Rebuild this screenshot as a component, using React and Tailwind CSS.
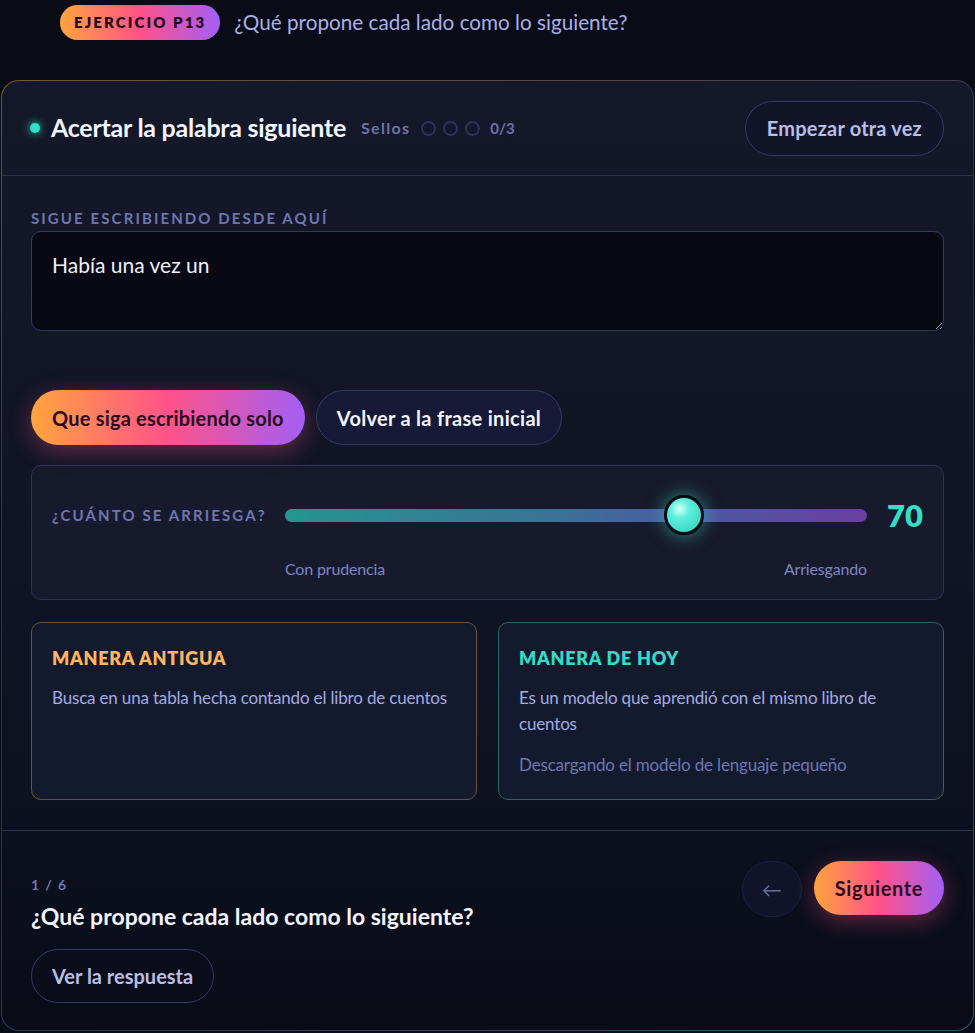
import { useState } from "react";

const grad = "bg-[linear-gradient(90deg,#ffa43d_0%,#ff5289_50%,#a25ff5_100%)]";

const Seal = () => (
    <span className="inline-block w-[15px] h-[15px] rounded-full border-2 border-[#2d3260]"></span>
);

const App = () => {
    const [text, setText] = useState("Había una vez un");
    const risk = 70;

    return (
        <div className="min-h-[1033px] bg-[#090b16] font-['Lato','Noto_Sans',sans-serif] text-white">
            {/* top strip */}
            <div className="flex items-center gap-[14px] pl-[60px] pt-[5px] h-[40px]">
                <span className={`${grad} h-[35px] px-[14px] rounded-full flex items-center text-[15px] font-extrabold tracking-[0.14em] text-[#240a1e]`}>
                    EJERCICIO P13
                </span>
                <span className="text-[20.7px] text-[#aab0e6]">¿Qué propone cada lado como lo siguiente?</span>
            </div>

            <div className="mt-[40px] mx-[1px] rounded-[18px] p-[1px] bg-[linear-gradient(160deg,#7a5635_0%,#2f3158_35%,#2c3458_70%,#275a60_100%)]">
                <div className="rounded-[17px] bg-[linear-gradient(180deg,#151829_0%,#121526_40%,#0e1120_75%,#090b17_100%)]">
                    {/* header */}
                    <div className="flex items-center justify-between h-[95px] pl-[28px] pr-[29px] border-b border-[#2c315a]">
                        <div className="flex items-center">
                            <span className="w-[10px] h-[10px] rounded-full bg-[#32e0c8] shadow-[0_0_8px_#32e0c8]"></span>
                            <h1 className="ml-[11px] text-[25px] font-bold tracking-[-0.01em] text-[#f2f4ff]">Acertar la palabra siguiente</h1>
                            <span className="ml-[15px] text-[16px] font-bold tracking-[0.08em] text-[#6d73ad]">Sellos</span>
                            <div className="ml-[11px] flex gap-[7px]">
                                <Seal />
                                <Seal />
                                <Seal />
                            </div>
                            <span className="ml-[10px] text-[15px] font-bold text-[#6d73ad]">0/3</span>
                        </div>
                        <button className="h-[55px] px-[21px] rounded-full border border-[#353a68] bg-[#121528] text-[20px] font-bold tracking-[0.01em] text-[#b9bee9]">
                            Empezar otra vez
                        </button>
                    </div>

                    <div className="px-[29px] pt-[34px]">
                        <label className="block text-[15px] font-bold tracking-[0.14em] text-[#6f76b4] leading-[16px]">SIGUE ESCRIBIENDO DESDE AQUÍ</label>
                        <textarea
                            value={text}
                            onChange={(e) => setText(e.target.value)}
                            className="mt-[5px] block w-full h-[100px] rounded-[10px] border border-[#343a68] bg-[#080914] px-[20px] py-[17px] text-[21px] text-[#eef0fb] outline-none resize-y"
                        />

                        <div className="mt-[59px] flex gap-[11px]">
                            <button className={`${grad} h-[55px] px-[21px] rounded-full text-[20px] font-bold tracking-[0.01em] text-[#2a0b22] shadow-[0_6px_22px_rgba(255,82,137,0.35)]`}>
                                Que siga escribiendo solo
                            </button>
                            <button className="h-[55px] px-[20px] rounded-full border border-[#343a66] bg-[#171a37] text-[20px] font-bold tracking-[0.015em] text-[#f2f4ff]">
                                Volver a la frase inicial
                            </button>
                        </div>

                        {/* slider */}
                        <div className="mt-[20px] rounded-[10px] border border-[#2e3358] bg-[#171a2c] px-[20px] pt-[30px] pb-[18px]">
                            <div className="flex items-center h-[38px]">
                                <span className="w-[233px] text-[15px] font-bold tracking-[0.14em] text-[#6f76b4]">¿CUÁNTO SE ARRIESGA?</span>
                                <div className="relative flex-1 h-[13px] rounded-full bg-[linear-gradient(90deg,#24968f_0%,#3b7296_45%,#4c5aa0_70%,#6a3ea2_100%)]">
                                    <span
                                        className="absolute top-1/2 w-[40px] h-[40px] -translate-y-1/2 rounded-full border-[3px] border-[#080a14] bg-[radial-gradient(circle_at_38%_32%,#d8fff8_0%,#5ef0dc_30%,#2cc9b8_100%)] shadow-[0_0_18px_rgba(60,230,210,0.55)]"
                                        style={{ left: `calc(${risk / 100} * (100% - 40px))` }}
                                    ></span>
                                </div>
                                <span className="w-[56px] text-right text-[31px] font-extrabold text-[#36dcc6]">{risk}</span>
                            </div>
                            <div className="mt-[23px] flex justify-between pl-[233px] pr-[56px] text-[16px] tracking-[-0.01em] text-[#7e86c2]">
                                <span>Con prudencia</span>
                                <span>Arriesgando</span>
                            </div>
                        </div>

                        {/* comparison */}
                        <div className="mt-[22px] grid grid-cols-2 gap-[21px]">
                            <div className="h-[178px] rounded-[10px] border border-[#6e5436] bg-[#141a2d] px-[20px] pt-[22px]">
                                <h3 className="text-[18px] font-extrabold tracking-[0.04em] text-[#ffb462]">MANERA ANTIGUA</h3>
                                <p className="mt-[13px] text-[17px] leading-[26px] tracking-[-0.01em] text-[#a3abe2]">Busca en una tabla hecha contando el libro de cuentos</p>
                            </div>
                            <div className="h-[178px] rounded-[10px] border border-[#2a6464] bg-[#141a2d] px-[20px] pt-[22px]">
                                <h3 className="text-[18px] font-extrabold tracking-[0.04em] text-[#33dcc7]">MANERA DE HOY</h3>
                                <p className="mt-[13px] text-[17px] leading-[26px] tracking-[-0.01em] text-[#a3abe2]">Es un modelo que aprendió con el mismo libro de cuentos</p>
                                <p className="mt-[15px] text-[17px] leading-[26px] tracking-[-0.01em] text-[#6f77b2]">Descargando el modelo de lenguaje pequeño</p>
                            </div>
                        </div>
                    </div>

                    {/* footer */}
                    <div className="mt-[30px] border-t border-[#2c315a] flex justify-between px-[29px] pt-[30px] pb-[27px]">
                        <div>
                            <div className="mt-[13px] text-[14px] font-bold tracking-[0.1em] text-[#6f76b4]">1 / 6</div>
                            <h2 className="mt-[4px] text-[23px] font-bold text-[#f2f4ff]">¿Qué propone cada lado como lo siguiente?</h2>
                            <button className="mt-[15px] h-[54px] px-[20px] rounded-full border border-[#343a66] text-[20px] font-bold text-[#b9bee9]">
                                Ver la respuesta
                            </button>
                        </div>
                        <div className="flex items-start gap-[12px]">
                            <button className="w-[60px] h-[56px] rounded-full border border-[#1d2140] bg-[#11142a] text-[20px] text-[#6a6e92]">←</button>
                            <button className={`${grad} h-[54px] px-[21px] rounded-full text-[20px] font-bold tracking-[0.03em] text-[#2a0b22] shadow-[0_6px_22px_rgba(255,82,137,0.35)]`}>
                                Siguiente
                            </button>
                        </div>
                    </div>
                </div>
            </div>
        </div>
    );
};

export default App;
